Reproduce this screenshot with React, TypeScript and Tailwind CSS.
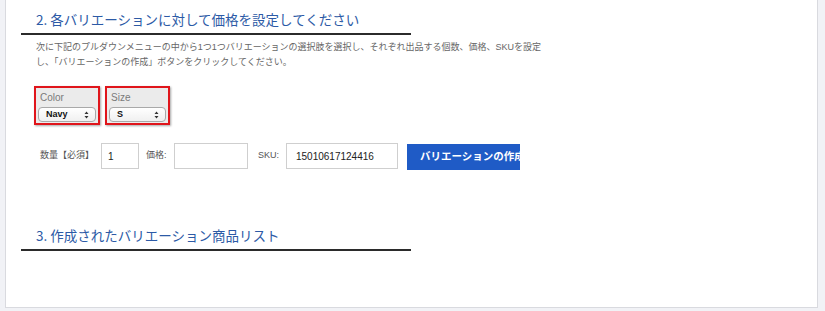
import React from 'react'

const font = { fontFamily: '"Liberation Sans", "Noto Sans CJK JP", sans-serif' }

function SectionTitle({ children }: { children: React.ReactNode }) {
  return (
    <div className="ml-[15px] w-[390px] border-b-2 border-[#2b2b2b] pl-[15px] pb-[5px]">
      <h2 className="font-['Noto_Sans_CJK_JP',sans-serif] text-[13.5px] leading-[17px] text-[#2c5aa6] font-normal whitespace-nowrap">{children}</h2>
    </div>
  )
}

function Arrows() {
  return (
    <svg width="5" height="8" viewBox="0 0 5 8" className="text-[#333]">
      <path d="M2.5 0.5 L4.5 3 H0.5 Z M2.5 7.5 L4.5 5 H0.5 Z" fill="currentColor" />
    </svg>
  )
}

function OptionBox({ label, value, width }: { label: string; value: string; width: string }) {
  return (
    <div className={`h-[39px] ${width} border-2 border-[#e0151b] bg-[#ebebeb] shadow-[1px_1px_2px_rgba(0,0,0,0.35)] px-[2px]`}>
      <div className="pl-[2px] pt-[3px] text-[10px] leading-[13px] text-[#7a7a7a]">{label}</div>
      <div className="mt-[3px] flex h-[15px] items-center justify-between rounded-[4px] border border-[#a9a9a9] bg-gradient-to-b from-white to-[#f0f0f0] pl-[7px] pr-[6px]">
        <span className="text-[9px] font-bold leading-none text-[#111]">{value}</span>
        <Arrows />
      </div>
    </div>
  )
}

export default function App() {
  return (
    <div className="min-h-screen bg-[#f1f2f6]" style={font}>
      <div className="ml-[5px] w-[813px] h-[308px] border-x border-b border-[#d9dadf] bg-white pt-[11px]">
        <SectionTitle>2. 各バリエーションに対して価格を設定してください</SectionTitle>

        <p className="ml-[30px] mt-[5px] w-[515px] text-[9px] leading-[15px] text-[#666]">
          次に下記のプルダウンメニューの中から1つ1つバリエーションの選択肢を選択し、それぞれ出品する個数、価格、SKUを設定し、「バリエーションの作成」ボタンをクリックしてください。
        </p>

        <div className="ml-[28px] mt-[16px] flex gap-[5px]">
          <OptionBox label="Color" value="Navy" width="w-[66px]" />
          <OptionBox label="Size" value="S" width="w-[65px]" />
        </div>

        <div className="ml-[34px] mt-[17px] flex items-center">
          <span className="w-[61px] text-[9px] text-[#555] whitespace-nowrap">数量【必須】</span>
          <div className="flex h-[26px] w-[38px] items-center border border-[#cfcfcf] pl-[6px] text-[10px] text-[#222]">1</div>
          <span className="ml-[7px] w-[28px] text-[9px] text-[#555]">価格:</span>
          <div className="h-[26px] w-[74px] border border-[#cfcfcf]" />
          <span className="ml-[10px] w-[28px] text-[9px] text-[#555]">SKU:</span>
          <div className="flex h-[26px] w-[112px] items-center border border-[#cfcfcf] pl-[9px] text-[10px] text-[#222]">15010617124416</div>
          <div className="ml-[9px] mt-[2px] flex h-[26px] w-[113px] items-center overflow-hidden whitespace-nowrap bg-[#1f5bc6] pl-[13px] text-[10.5px] font-bold text-white">
            バリエーションの作成
          </div>
        </div>

        <div className="mt-[57px]">
          <SectionTitle>3. 作成されたバリエーション商品リスト</SectionTitle>
        </div>
      </div>
    </div>
  )
}
